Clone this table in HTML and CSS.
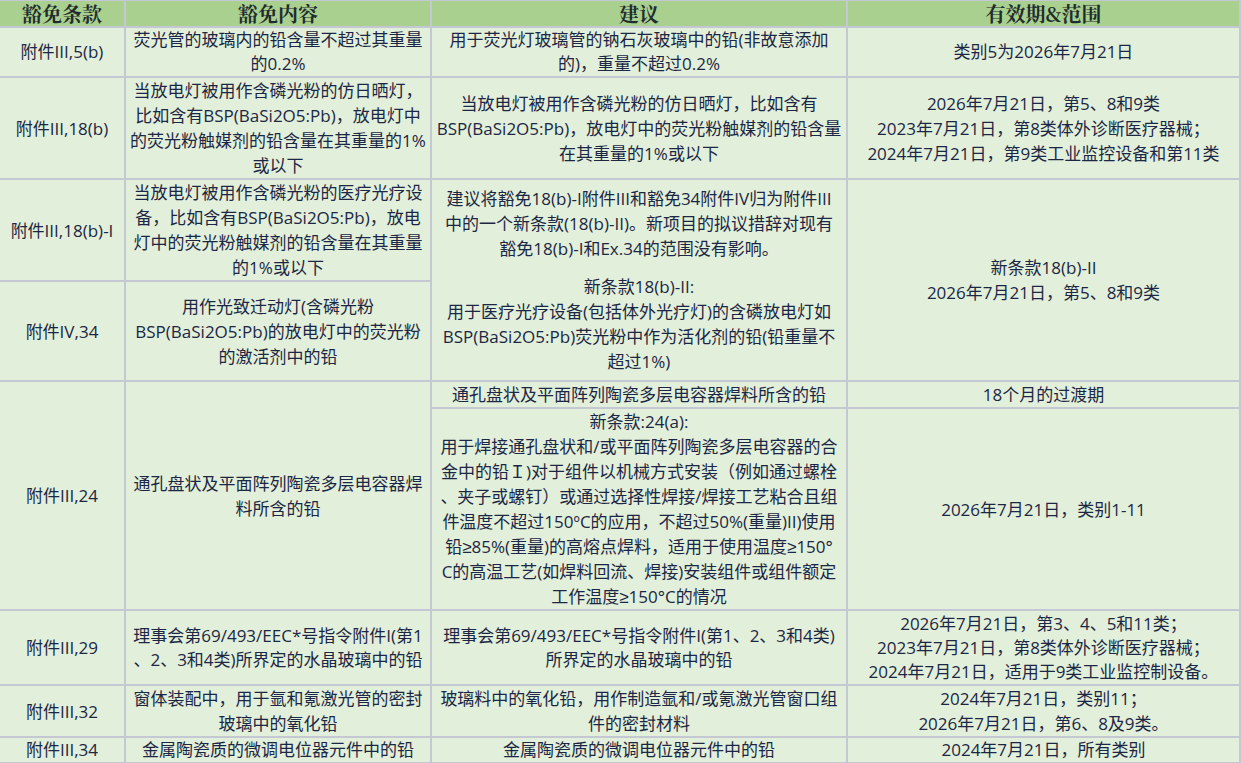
FILE: index.html
```html
<!DOCTYPE html>
<html lang="zh-CN">
<head>
<meta charset="utf-8">
<title>豁免条款</title>
<link rel="stylesheet" href="styles.css">
</head>
<body>
<table class="grid">
  <colgroup>
    <col class="c1"><col class="c2"><col class="c3"><col class="c4">
  </colgroup>
  <thead>
    <tr class="r-head">
      <th>豁免条款</th>
      <th>豁免内容</th>
      <th>建议</th>
      <th>有效期&amp;范围</th>
    </tr>
  </thead>
  <tbody>
    <tr class="r1 tight">
      <td>附件III,5(b)</td>
      <td>荧光管的玻璃内的铅含量不超过其重量<br>的0.2%</td>
      <td>用于荧光灯玻璃管的钠石灰玻璃中的铅(非故意添加<br>的)，重量不超过0.2%</td>
      <td>类别5为2026年7月21日</td>
    </tr>
    <tr class="r2">
      <td>附件III,18(b)</td>
      <td>当放电灯被用作含磷光粉的仿日晒灯，<br>比如含有BSP(BaSi2O5:Pb)，放电灯中<br>的荧光粉触媒剂的铅含量在其重量的1%<br>或以下</td>
      <td>当放电灯被用作含磷光粉的仿日晒灯，比如含有<br>BSP(BaSi2O5:Pb)，放电灯中的荧光粉触媒剂的铅含量<br>在其重量的1%或以下</td>
      <td>2026年7月21日，第5、8和9类<br>2023年7月21日，第8类体外诊断医疗器械；<br>2024年7月21日，第9类工业监控设备和第11类</td>
    </tr>
    <tr class="r3">
      <td>附件III,18(b)-I</td>
      <td>当放电灯被用作含磷光粉的医疗光疗设<br>备，比如含有BSP(BaSi2O5:Pb)，放电<br>灯中的荧光粉触媒剂的铅含量在其重量<br>的1%或以下</td>
      <td rowspan="2">
        <div>建议将豁免18(b)-I附件III和豁免34附件IV归为附件III<br>中的一个新条款(18(b)-II)。新项目的拟议措辞对现有<br>豁免18(b)-I和Ex.34的范围没有影响。</div>
        <div class="para">新条款18(b)-II:<br>用于医疗光疗设备(包括体外光疗灯)的含磷放电灯如<br>BSP(BaSi2O5:Pb)荧光粉中作为活化剂的铅(铅重量不<br>超过1%)</div>
      </td>
      <td rowspan="2">新条款18(b)-II<br>2026年7月21日，第5、8和9类</td>
    </tr>
    <tr class="r4">
      <td>附件IV,34</td>
      <td>用作光致迁动灯(含磷光粉<br>BSP(BaSi2O5:Pb)的放电灯中的荧光粉<br>的激活剂中的铅</td>
    </tr>
    <tr class="r5a">
      <td rowspan="2">附件III,24</td>
      <td rowspan="2">通孔盘状及平面阵列陶瓷多层电容器焊<br>料所含的铅</td>
      <td>通孔盘状及平面阵列陶瓷多层电容器焊料所含的铅</td>
      <td>18个月的过渡期</td>
    </tr>
    <tr class="r5b">
      <td>新条款:24(a):<br>用于焊接通孔盘状和/或平面阵列陶瓷多层电容器的合<br>金中的铅Ｉ)对于组件以机械方式安装（例如通过螺栓<br>、夹子或螺钉）或通过选择性焊接/焊接工艺粘合且组<br>件温度不超过150ºC的应用，不超过50%(重量)II)使用<br>铅<span class="sym">≥</span>85%(重量)的高熔点焊料，适用于使用温度<span class="sym">≥</span>150°<br>C的高温工艺(如焊料回流、焊接)安装组件或组件额定<br>工作温度<span class="sym">≥</span>150°C的情况</td>
      <td>2026年7月21日，类别1-11</td>
    </tr>
    <tr class="r6 tight">
      <td>附件III,29</td>
      <td>理事会第69/493/EEC*号指令附件I(第1<br>、2、3和4类)所界定的水晶玻璃中的铅</td>
      <td>理事会第69/493/EEC*号指令附件I(第1、2、3和4类)<br>所界定的水晶玻璃中的铅</td>
      <td>2026年7月21日，第3、4、5和11类；<br>2023年7月21日，第8类体外诊断医疗器械；<br>2024年7月21日，适用于9类工业监控制设备。</td>
    </tr>
    <tr class="r7">
      <td>附件III,32</td>
      <td>窗体装配中，用于氩和氪激光管的密封<br>玻璃中的氧化铅</td>
      <td>玻璃料中的氧化铅，用作制造氩和/或氪激光管窗口组<br>件的密封材料</td>
      <td>2024年7月21日，类别11；<br>2026年7月21日，第6、8及9类。</td>
    </tr>
    <tr class="r8 tight">
      <td>附件III,34</td>
      <td>金属陶瓷质的微调电位器元件中的铅</td>
      <td>金属陶瓷质的微调电位器元件中的铅</td>
      <td>2024年7月21日，所有类别</td>
    </tr>
  </tbody>
</table>
</body>
</html>
```

FILE: styles.css
```css
html, body {
  margin: 0;
  padding: 0;
  background: #ffffff;
  overflow: hidden;
}

.grid {
  margin: -1px 0 0 -2px;
  table-layout: fixed;
  width: 1243px;
  border-collapse: separate;
  border-spacing: 2px;
  background: #c3c8d2;
  font-family: "Open Sans", "Noto Sans CJK SC", sans-serif;
  font-size: 17px;
  line-height: 25px;
  color: #1b2744;
}

.c1 { width: 124px; }
.c2 { width: 304px; }
.c3 { width: 414px; }
.c4 { width: 391px; }

.grid th,
.grid td {
  padding: 0;
  text-align: center;
  vertical-align: middle;
  white-space: nowrap;
}

.grid th {
  background: #a9d08e;
  height: 25px;
  line-height: 25px;
  font-family: "Noto Serif CJK SC", "Noto Sans CJK SC", serif;
  font-size: 20px;
  font-weight: 700;
  color: #1f2d2f;
}

.grid td {
  background: #e2efda;
}

.sym {
  font-family: "Liberation Sans", sans-serif;
  line-height: 1;
}

.tight td { line-height: 24px; }

.r1 td { height: 48px; }
.r2 td { height: 100px; }
.r3 td { height: 99px; }
.r4 td { height: 98px; }
.r5a td { height: 25px; }
.r5b td { height: 200px; }
.r6 td { height: 73px; }
.r7 td { height: 50px; }
.r8 td { height: 24px; }

.para { margin-top: 13px; }
```
